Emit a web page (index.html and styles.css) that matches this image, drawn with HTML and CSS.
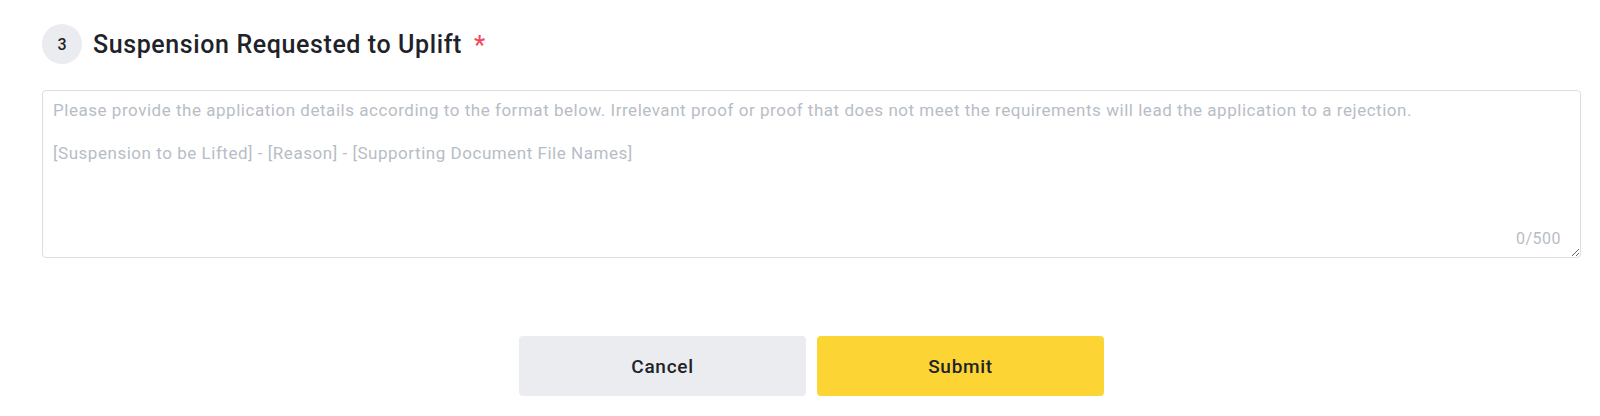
FILE: index.html
```html
<!DOCTYPE html>
<html lang="en">
<head>
  <meta charset="UTF-8">
  <meta name="viewport" content="width=device-width, initial-scale=1.0">
  <title>Suspension Uplift</title>
  <link rel="stylesheet" href="styles.css">
</head>
<body>

  <div class="container">
    <div class="step-title">
      <span class="step-num">3</span>
      <h2>Suspension Requested to Uplift</h2>
      <span class="required">*</span>
    </div>

    <div class="field">
      <textarea id="details" maxlength="500" placeholder="Please provide the application details according to the format below. Irrelevant proof or proof that does not meet the requirements will lead the application to a rejection.&#10;&#10;[Suspension to be Lifted] - [Reason] - [Supporting Document File Names]"></textarea>
      <span class="counter" id="counter">0/500</span>
    </div>

    <div class="actions">
      <button type="button" class="btn btn-cancel">Cancel</button>
      <button type="button" class="btn btn-submit">Submit</button>
    </div>
  </div>

  <script>
    const details = document.getElementById("details");
    const counter = document.getElementById("counter");

    details.addEventListener("input", () => {
      counter.textContent = details.value.length + "/500";
    });
  </script>

</body>
</html>
```

FILE: styles.css
```css
* {
  margin: 0;
  padding: 0;
  box-sizing: border-box;
}

body {
  font-family: Roboto, "Liberation Sans", Arial, sans-serif;
  background: #fff;
  color: #1e2329;
}

.container {
  width: 1539px;
  margin-left: 42px;
  padding-top: 24px;
}

.step-title {
  display: flex;
  align-items: center;
  height: 40px;
}

.step-num {
  width: 40px;
  height: 40px;
  border-radius: 50%;
  background: #eaecef;
  display: flex;
  align-items: center;
  justify-content: center;
  font-size: 16px;
  font-weight: 500;
  margin-right: 11px;
}

h2 {
  font-size: 25px;
  font-weight: 500;
  letter-spacing: 0.6px;
  color: #1e2329;
}

.required {
  color: #f6465d;
  font-size: 25px;
  font-weight: 500;
  margin-left: 12px;
  margin-top: 2px;
}

.field {
  position: relative;
  margin-top: 26px;
}

textarea {
  display: block;
  width: 100%;
  height: 168px;
  padding: 9px 10px 8px;
  border: 1px solid #dcdee2;
  border-radius: 4px;
  font-family: Roboto, "Liberation Sans", Arial, sans-serif;
  font-size: 17px;
  letter-spacing: 0.53px;
  line-height: 21.5px;
  color: #1e2329;
  resize: vertical;
  outline: none;
}

textarea::placeholder {
  color: #b7bdc6;
}

.counter {
  position: absolute;
  right: 20px;
  bottom: 10px;
  font-size: 16px;
  letter-spacing: 0.5px;
  color: #b7bdc6;
}

.actions {
  display: flex;
  justify-content: center;
  gap: 11px;
  margin-top: 78px;
}

.btn {
  width: 287px;
  height: 60px;
  border: none;
  border-radius: 4px;
  font-family: Roboto, "Liberation Sans", Arial, sans-serif;
  font-size: 19px;
  font-weight: 500;
  letter-spacing: 0.7px;
  color: #1e2329;
  cursor: pointer;
}

.btn-cancel {
  background-color: #eaecef;
}

.btn-submit {
  background-color: #fcd535;
}
```
